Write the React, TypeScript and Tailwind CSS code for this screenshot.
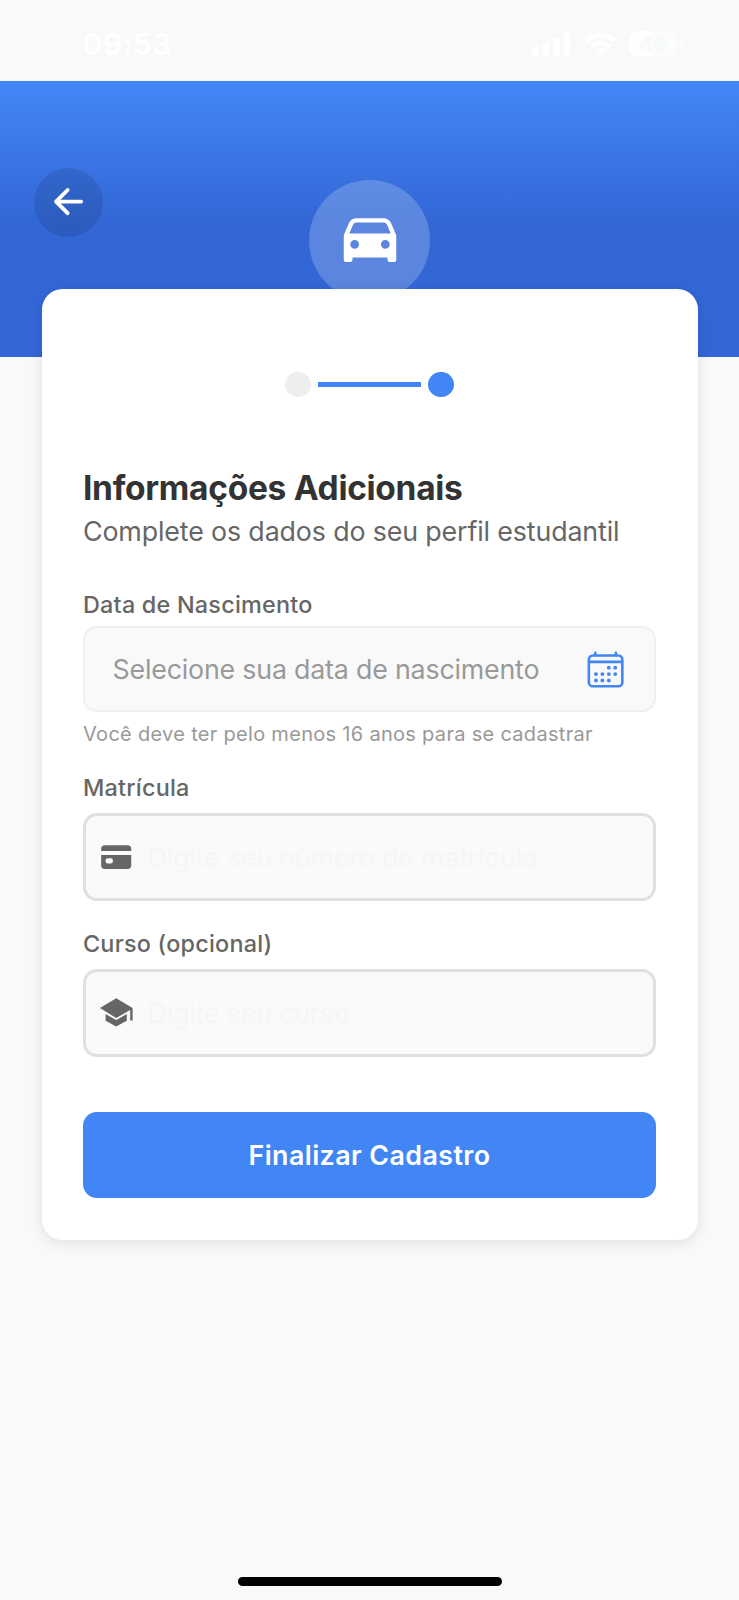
import type { ReactNode } from "react";
import { IoArrowBack, IoCalendarOutline, IoCar, IoCard } from "react-icons/io5";

function StatusBar() {
  return (
    <div className="flex h-[81px] shrink-0 items-start justify-between pl-[83px] pr-[57px] text-white">
      <span className="pt-[24px] text-[29.5px] font-semibold leading-[40px] tracking-[0.8px]">09:53</span>
      <div className="flex items-center pt-[31px]">
        <svg width="39" height="24" viewBox="0 0 39 24" fill="currentColor">
          <rect x="0" y="15" width="7" height="8.5" rx="2" />
          <rect x="10.5" y="10.5" width="7" height="13" rx="2" />
          <rect x="21" y="5.5" width="7" height="18" rx="2" />
          <rect x="31.5" y="0.5" width="7" height="23" rx="2" />
        </svg>
        <svg className="ml-[13px]" width="33" height="24" viewBox="0 0 33 24" fill="none" stroke="currentColor" strokeWidth="4.6">
          <path d="M2 9.2a21 21 0 0 1 29 0" />
          <path d="M7.4 14.8a13 13 0 0 1 18.2 0" />
          <path d="M16.5 23.5l-5.2-5.3a7.6 7.6 0 0 1 10.4 0z" fill="currentColor" stroke="none" />
        </svg>
        <div className="ml-[12px] flex h-[25px] w-[48px] items-center justify-center rounded-[8px] bg-[linear-gradient(90deg,#ffffff_46%,#fbfcfc_46%)] text-[22px] font-bold leading-none tracking-[0.4px] text-[#f7f9fa]">
          45
        </div>
        <div className="ml-[2px] h-[8px] w-[3px] rounded-r-full bg-[#fbfcfc]" />
      </div>
    </div>
  );
}

function Steps() {
  return (
    <div className="flex items-center justify-center gap-[6.9px]">
      <div className="size-[25.8px] rounded-full bg-[#eeeeee]" />
      <div className="h-[5.2px] w-[103.2px] bg-[#4285f4]" />
      <div className="size-[25.8px] rounded-full bg-[#4285f4]" />
    </div>
  );
}

function GraduationCap() {
  return (
    <svg width="33" height="29" viewBox="0 0 33 29" fill="currentColor">
      <path d="M16.2 0.2L32.6 9.9V22.4H30.2V12.1L16.2 20L0 9.9z" />
      <path d="M5.6 16.1L16.2 22.1L26.8 16.1V22.7L16.2 28.5L5.6 22.7z" />
    </svg>
  );
}

function Label({ children }: { children: ReactNode }) {
  return (
    <label className="block text-[23.4px] font-medium leading-[28px] tracking-[0.22px] text-[#666666]">
      {children}
    </label>
  );
}

function Field({ icon, placeholder }: { icon: ReactNode; placeholder: string }) {
  return (
    <div className="flex h-[88px] items-center rounded-[14px] border-[3px] border-[#e0e0e0] bg-[#fafafa] pl-[12px] text-[#666666]">
      <span className="flex w-[36px] items-center justify-center">{icon}</span>
      <span className="ml-[13.5px] text-[26.8px] tracking-[-0.17px] text-[#f5f6f8]">{placeholder}</span>
    </div>
  );
}

export default function App() {
  return (
    <div className="flex h-[1600px] w-[739px] flex-col overflow-hidden bg-[#f8f9fb] font-['Inter','Liberation_Sans',sans-serif]">
      <StatusBar />

      <header className="flex h-[276px] shrink-0 items-start bg-[linear-gradient(180deg,#4285f4_0px,#4285f4_8px,#3367d6_141px)] pl-[34px]">
        <button className="mt-[86.5px] flex size-[69px] items-center justify-center rounded-full bg-black/10 text-white">
          <IoArrowBack size={41.2} className="ml-[1px]" />
        </button>
        <div className="ml-[206px] mt-[99px] flex size-[120.6px] items-center justify-center rounded-full bg-white/20 text-white">
          <IoCar size={70} className="ml-[1px]" />
        </div>
      </header>

      <main className="relative mx-[41.5px] -mt-[68.5px] h-[951.5px] shrink-0 rounded-[20.5px] bg-white px-[41.5px] shadow-[0_3px_14px_rgba(0,0,0,0.1)]">
        <div className="pt-[83px]">
          <Steps />
        </div>

        <h1 className="mt-[71px] whitespace-nowrap text-[33.5px] font-bold leading-[40px] tracking-[-0.3px] text-[#333333]">
          Informações Adicionais
        </h1>
        <p className="mt-[6px] whitespace-nowrap text-[26.8px] leading-[34px] tracking-[-0.14px] text-[#666666]">
          Complete os dados do seu perfil estudantil
        </p>

        <div className="mt-[42.5px]">
          <Label>Data de Nascimento</Label>
          <div className="mt-[7.5px] flex h-[86px] items-center justify-between rounded-[14px] border-2 border-[#f0f0f0] bg-[#f9f9f9] pl-[27.5px] pr-[28px]">
            <span className="text-[26.8px] tracking-[-0.2px] text-[#999999]">Selecione sua data de nascimento</span>
            <IoCalendarOutline size={41.2} className="text-[#4285f4]" />
          </div>
          <p className="mt-[10px] text-[20px] leading-[24px] tracking-[0.3px] text-[#999999]">
            Você deve ter pelo menos 16 anos para se cadastrar
          </p>
        </div>

        <div className="mt-[28px]">
          <Label>Matrícula</Label>
          <div className="mt-[11px]">
            <Field icon={<IoCard size={34.4} />} placeholder="Digite seu número de matrícula" />
          </div>
        </div>

        <div className="mt-[28.5px]">
          <Label>Curso (opcional)</Label>
          <div className="mt-[11px]">
            <Field icon={<GraduationCap />} placeholder="Digite seu curso" />
          </div>
        </div>

        <button className="mt-[55px] flex h-[86.3px] w-full items-center justify-center rounded-[14px] bg-[#4285f4] text-[26.8px] font-semibold tracking-[0.43px] text-white">
          Finalizar Cadastro
        </button>
      </main>

      <div className="mx-auto mb-[14px] mt-auto h-[9px] w-[264px] shrink-0 rounded-full bg-black" />
    </div>
  );
}
